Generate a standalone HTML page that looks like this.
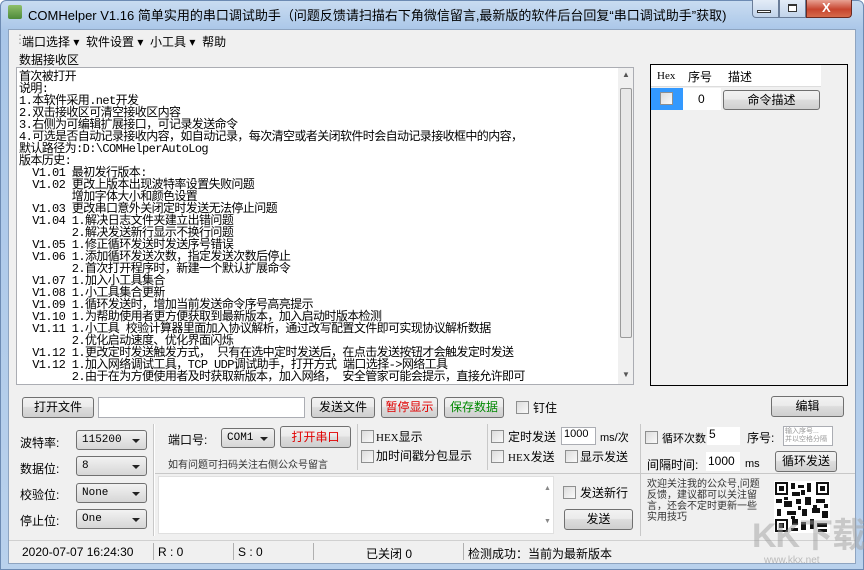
<!DOCTYPE html>
<html><head><meta charset="utf-8"><style>
*{box-sizing:border-box;margin:0;padding:0}
body{width:864px;height:570px;overflow:hidden;background:#fff;font-family:"Liberation Sans","Noto Sans CJK SC",sans-serif;font-size:12px;color:#000;position:relative}
.abs{position:absolute}
.win{left:0;top:0;width:864px;height:570px;background:linear-gradient(#c9dcf1,#a9c6e8 30px,#b9d1ec);border:1px solid #6d8bb3;border-radius:6px 6px 0 0}
.client{left:8px;top:29px;width:848px;height:535px;background:#f0f0f0;border:1px solid #8ea4c0}
.btn{position:absolute;border:1px solid #707070;border-radius:3px;background:linear-gradient(#f2f2f2,#ebebeb 45%,#dddddd 50%,#cfcfcf);text-align:center;font-size:12px}
.tb{position:absolute;background:#fff;border:1px solid #abadb3}
.cb{position:absolute;width:13px;height:13px;border:1px solid #8e8f8f;background:linear-gradient(135deg,#dcdcdc,#fafafa)}
.combo{position:absolute;border:1px solid #707070;border-radius:3px;background:linear-gradient(#f2f2f2,#e4e4e4 50%,#d6d6d6);font-family:"Liberation Mono","Noto Sans CJK SC",monospace;font-size:11px;padding-left:5px}
.combo:after{content:"";position:absolute;right:6px;top:8px;border:4px solid transparent;border-top:4px solid #222}
.t{position:absolute;white-space:nowrap}
.recv{font-family:"Liberation Mono","Noto Sans CJK SC",monospace;font-size:12px;line-height:12px;white-space:pre;letter-spacing:-0.6px}
</style></head><body>
<div class="abs win"></div>
<div class="t" style="left:8px;top:5px;width:14px;height:14px;background:linear-gradient(#8fbf6a,#4e8a3a);border-radius:2px"></div>
<div class="t" style="left:28px;top:5px;font-size:13px">COMHelper V1.16 简单实用的串口调试助手（问题反馈请扫描右下角微信留言,最新版的软件后台回复“串口调试助手”获取)</div>
<div class="abs" style="left:752px;top:0;width:27px;height:18px;border:1px solid #6a7d99;border-top:none;border-radius:0 0 0 4px;background:linear-gradient(#e3ecf7,#c1d3ea)"></div>
<div class="abs" style="left:757px;top:10px;width:14px;height:3px;border:1px solid #333;background:#fff"></div>
<div class="abs" style="left:779px;top:0;width:27px;height:18px;border:1px solid #6a7d99;border-top:none;background:linear-gradient(#e3ecf7,#c1d3ea)"></div>
<div class="abs" style="left:788px;top:4px;width:9px;height:8px;border:1px solid #333;border-top-width:2px;background:#fff"></div>
<div class="abs" style="left:806px;top:0;width:46px;height:18px;border:1px solid #6b2a22;border-top:none;border-radius:0 0 4px 0;background:linear-gradient(#e8a293,#c7452f 55%,#d66a4c)"></div>
<div class="t" style="left:822px;top:0;color:#fff;font-weight:bold;font-size:13px">X</div>
<div class="abs client"></div>
<div class="t" style="left:14px;top:32px;color:#999">⋮</div>
<div class="t" style="left:22px;top:33px">端口选择 ▾ &nbsp;软件设置 ▾ &nbsp;小工具 ▾ &nbsp;帮助</div>
<div class="t" style="left:19px;top:51px">数据接收区</div>
<div class="tb" style="left:16px;top:67px;width:618px;height:318px;overflow:hidden">
<div class="recv" style="position:absolute;left:2px;top:3px">首次被打开
说明:
1.本软件采用.net开发
2.双击接收区可清空接收区内容
3.右侧为可编辑扩展接口，可记录发送命令
4.可选是否自动记录接收内容，如自动记录，每次清空或者关闭软件时会自动记录接收框中的内容，
默认路径为:D:\COMHelperAutoLog
版本历史:
  V1.01 最初发行版本:
  V1.02 更改上版本出现波特率设置失败问题
        增加字体大小和颜色设置
  V1.03 更改串口意外关闭定时发送无法停止问题
  V1.04 1.解决日志文件夹建立出错问题
        2.解决发送新行显示不换行问题
  V1.05 1.修正循环发送时发送序号错误
  V1.06 1.添加循环发送次数，指定发送次数后停止
        2.首次打开程序时，新建一个默认扩展命令
  V1.07 1.加入小工具集合
  V1.08 1.小工具集合更新
  V1.09 1.循环发送时，增加当前发送命令序号高亮提示
  V1.10 1.为帮助使用者更方便获取到最新版本，加入启动时版本检测
  V1.11 1.小工具 校验计算器里面加入协议解析，通过改写配置文件即可实现协议解析数据
        2.优化启动速度、优化界面闪烁
  V1.12 1.更改定时发送触发方式， 只有在选中定时发送后，在点击发送按钮才会触发定时发送
  V1.12 1.加入网络调试工具，TCP UDP调试助手，打开方式 端口选择->网络工具
        2.由于在为方便使用者及时获取新版本，加入网络， 安全管家可能会提示，直接允许即可</div>
<div class="abs" style="left:601px;top:0;width:16px;height:316px;background:#f0f0f0"></div>
<div class="abs" style="left:603px;top:20px;width:12px;height:250px;border:1px solid #9a9a9a;border-radius:2px;background:#e8e8e8"></div>
<div class="t" style="left:605px;top:2px;font-size:8px;color:#555">▲</div>
<div class="t" style="left:605px;top:302px;font-size:8px;color:#555">▼</div>
</div>
<div class="abs" style="left:650px;top:64px;width:198px;height:322px;border:1px solid #000;background:#f0f0f0"></div>
<div class="abs" style="left:651px;top:65px;width:170px;height:22px;background:#fff;border-bottom:1px solid #ddd"></div>
<div class="t" style="left:657px;top:70px;font-family:'Liberation Serif';font-size:11px">Hex</div>
<div class="t" style="left:688px;top:68px">序号</div>
<div class="t" style="left:728px;top:68px">描述</div>
<div class="abs" style="left:651px;top:88px;width:32px;height:22px;background:#3399ff"></div>
<div class="cb" style="left:660px;top:92px"></div>
<div class="abs" style="left:683px;top:88px;width:38px;height:22px;background:#fff"></div>
<div class="t" style="left:698px;top:92px">0</div>
<div class="btn" style="left:723px;top:90px;width:97px;height:20px;line-height:18px">命令描述</div>

<div class="btn" style="left:22px;top:397px;width:72px;height:21px;line-height:19px">打开文件</div>
<div class="tb" style="left:98px;top:397px;width:207px;height:21px"></div>
<div class="btn" style="left:311px;top:397px;width:64px;height:21px;line-height:19px">发送文件</div>
<div class="btn" style="left:381px;top:397px;width:57px;height:21px;line-height:19px;color:#e00000">暂停显示</div>
<div class="btn" style="left:444px;top:397px;width:60px;height:21px;line-height:19px;color:#008800">保存数据</div>
<div class="cb" style="left:516px;top:401px"></div><div class="t" style="left:533px;top:399px">钉住</div>
<div class="btn" style="left:771px;top:396px;width:73px;height:21px;line-height:19px">编辑</div>

<div class="abs" style="left:153px;top:424px;width:1px;height:112px;border-left:1px solid #c8c8c8;border-right:1px solid #fff"></div>
<div class="abs" style="left:357px;top:424px;width:1px;height:46px;border-left:1px solid #c8c8c8"></div>
<div class="abs" style="left:487px;top:424px;width:1px;height:46px;border-left:1px solid #c8c8c8"></div>
<div class="abs" style="left:640px;top:424px;width:1px;height:112px;border-left:1px solid #c8c8c8"></div>
<div class="abs" style="left:155px;top:473px;width:700px;height:1px;background:#c8c8c8"></div>

<div class="t" style="left:20px;top:434px">波特率:</div><div class="combo" style="left:76px;top:430px;width:71px;height:20px;line-height:18px">115200</div>
<div class="t" style="left:20px;top:460px">数据位:</div><div class="combo" style="left:76px;top:456px;width:71px;height:20px;line-height:18px">8</div>
<div class="t" style="left:20px;top:486px">校验位:</div><div class="combo" style="left:76px;top:483px;width:71px;height:20px;line-height:18px">None</div>
<div class="t" style="left:20px;top:512px">停止位:</div><div class="combo" style="left:76px;top:509px;width:71px;height:20px;line-height:18px">One</div>

<div class="t" style="left:168px;top:431px">端口号:</div><div class="combo" style="left:221px;top:428px;width:54px;height:20px;line-height:18px">COM1</div>
<div class="btn" style="left:280px;top:426px;width:71px;height:22px;line-height:20px;color:#e00000">打开串口</div>
<div class="t" style="left:168px;top:456px;font-size:10px;color:#333">如有问题可扫码关注右侧公众号留言</div>
<div class="cb" style="left:361px;top:430px"></div><div class="t" style="left:376px;top:428px"><span style="font-family:'Liberation Serif';font-size:11px">HEX</span>显示</div>
<div class="cb" style="left:361px;top:450px"></div><div class="t" style="left:376px;top:447px">加时间戳分包显示</div>
<div class="cb" style="left:491px;top:430px"></div><div class="t" style="left:508px;top:428px">定时发送</div>
<div class="tb" style="left:561px;top:427px;width:35px;height:18px;font-size:11px;padding-left:2px">1000</div><div class="t" style="left:600px;top:429px;font-size:11px">ms/次</div>
<div class="cb" style="left:491px;top:450px"></div><div class="t" style="left:508px;top:448px"><span style="font-family:'Liberation Serif';font-size:11px">HEX</span>发送</div>
<div class="cb" style="left:565px;top:450px"></div><div class="t" style="left:580px;top:448px">显示发送</div>
<div class="cb" style="left:645px;top:431px"></div><div class="t" style="left:662px;top:430px;font-size:11px">循环次数</div>
<div class="tb" style="left:707px;top:427px;width:33px;height:18px;border:none;padding-left:2px">5</div>
<div class="t" style="left:747px;top:429px">序号:</div>
<div class="tb" style="left:783px;top:426px;width:50px;height:20px;font-size:7px;color:#999;line-height:8px;padding:1px">输入序号...<br>并以空格分隔</div>
<div class="t" style="left:647px;top:456px">间隔时间:</div>
<div class="tb" style="left:706px;top:452px;width:34px;height:19px;border:none;padding-left:2px;line-height:18px">1000</div><div class="t" style="left:745px;top:458px;font-size:11px">ms</div>
<div class="btn" style="left:775px;top:451px;width:62px;height:21px;line-height:19px">循环发送</div>

<div class="tb" style="left:158px;top:476px;width:396px;height:58px;border-color:#e0e0e0"></div>
<div class="t" style="left:544px;top:485px;font-size:7px;color:#888">▲</div>
<div class="t" style="left:544px;top:518px;font-size:7px;color:#888">▼</div>
<div class="cb" style="left:563px;top:486px"></div><div class="t" style="left:580px;top:484px">发送新行</div>
<div class="btn" style="left:564px;top:509px;width:69px;height:21px;line-height:19px">发送</div>
<div class="t" style="left:647px;top:479px;font-size:10px;line-height:11px;color:#333;white-space:normal;width:118px">欢迎关注我的公众号,问题反馈，建议都可以关注留言，还会不定时更新一些实用技巧</div>
<svg class="abs" style="left:774px;top:481px" width="56" height="52" viewBox="0 0 56 52">
<rect width="56" height="52" fill="#fff"/>
<g fill="#111">
<rect x="1" y="1" width="13" height="13"/><rect x="42" y="1" width="13" height="13"/><rect x="1" y="38" width="13" height="13"/>
</g>
<g fill="#fff"><rect x="3" y="3" width="9" height="9"/><rect x="44" y="3" width="9" height="9"/><rect x="3" y="40" width="9" height="9"/></g>
<g fill="#111"><rect x="5" y="5" width="5" height="5"/><rect x="46" y="5" width="5" height="5"/><rect x="5" y="42" width="5" height="5"/>
<rect x="17" y="2" width="4" height="6"/><rect x="24" y="4" width="6" height="3"/><rect x="33" y="2" width="4" height="9"/><rect x="18" y="11" width="8" height="4"/><rect x="27" y="9" width="4" height="5"/>
<rect x="2" y="18" width="6" height="4"/><rect x="10" y="16" width="4" height="3"/><rect x="10" y="20" width="8" height="6"/><rect x="22" y="18" width="5" height="5"/><rect x="31" y="16" width="6" height="8"/><rect x="42" y="18" width="9" height="4"/><rect x="39" y="24" width="4" height="3"/><rect x="50" y="23" width="4" height="4"/>
<rect x="3" y="28" width="4" height="7"/><rect x="13" y="30" width="9" height="4"/><rect x="24" y="25" width="3" height="4"/><rect x="28" y="28" width="5" height="7"/><rect x="38" y="27" width="8" height="5"/><rect x="48" y="30" width="6" height="7"/><rect x="17" y="35" width="4" height="3"/>
<rect x="18" y="38" width="6" height="6"/><rect x="27" y="41" width="5" height="8"/><rect x="36" y="38" width="4" height="10"/><rect x="43" y="42" width="10" height="4"/><rect x="17" y="47" width="7" height="3"/><rect x="44" y="48" width="9" height="3"/>
</g></svg>

<div class="abs" style="left:9px;top:540px;width:846px;height:23px;border-top:1px solid #d0d0d0"></div>
<div class="t" style="left:22px;top:545px">2020-07-07 16:24:30</div>
<div class="abs" style="left:153px;top:543px;width:1px;height:17px;background:#b0b0b0"></div>
<div class="t" style="left:158px;top:545px">R : 0</div>
<div class="abs" style="left:233px;top:543px;width:1px;height:17px;background:#b0b0b0"></div>
<div class="t" style="left:238px;top:545px">S : 0</div>
<div class="abs" style="left:313px;top:543px;width:1px;height:17px;background:#b0b0b0"></div>
<div class="t" style="left:366px;top:545px">已关闭 0</div>
<div class="abs" style="left:463px;top:543px;width:1px;height:17px;background:#b0b0b0"></div>
<div class="t" style="left:468px;top:545px">检测成功：当前为最新版本</div>
<div class="t" style="left:752px;top:508px;font-size:34px;font-weight:bold;color:rgba(160,160,160,0.5);letter-spacing:-1px">KK下载</div>
<div class="t" style="left:764px;top:555px;font-size:10px;color:rgba(150,150,150,0.6)">www.kkx.net</div>
</body></html>
